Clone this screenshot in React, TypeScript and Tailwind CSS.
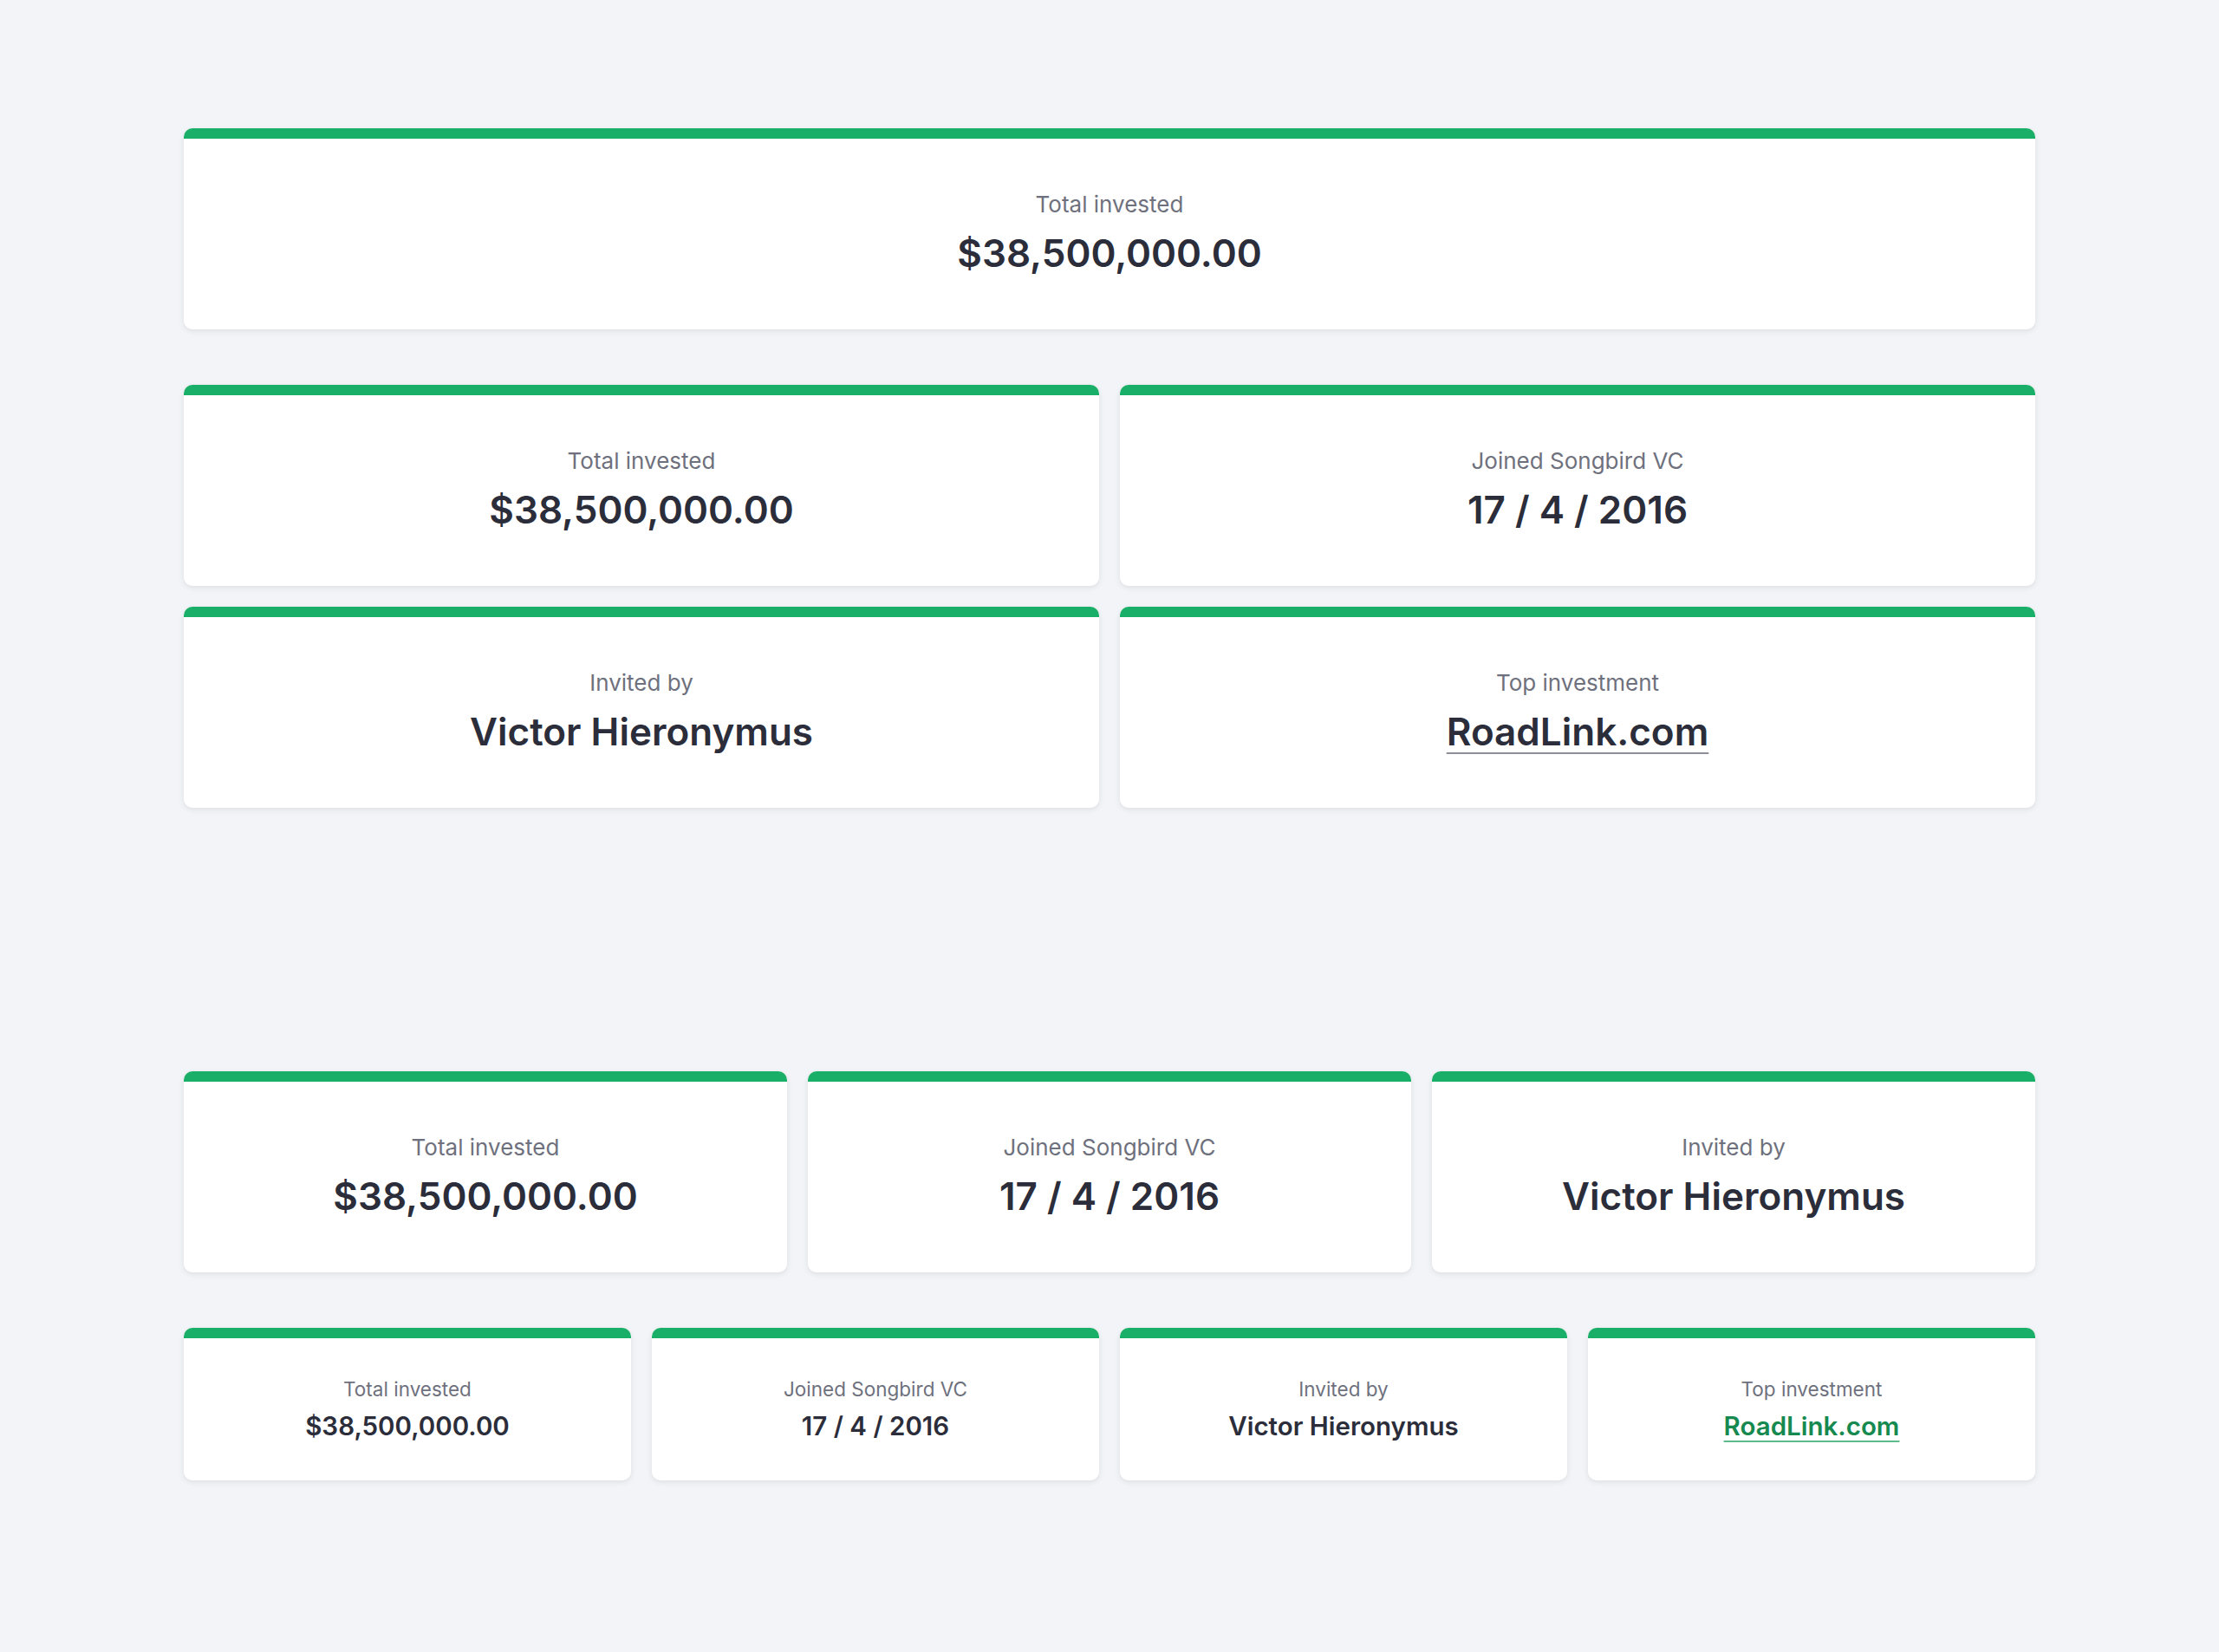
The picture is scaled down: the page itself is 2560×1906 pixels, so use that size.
// StatCards

type Stat = {
  label: string;
  value: string;
  link?: boolean;
};

const stats: Stat[] = [
  { label: "Total invested", value: "$38,500,000.00" },
  { label: "Joined Songbird VC", value: "17 / 4 / 2016" },
  { label: "Invited by", value: "Victor Hieronymus" },
  { label: "Top investment", value: "RoadLink.com", link: true },
];

const StatCard = ({ stat }: { stat: Stat }) => {
  return (
    <div className="h-[232px] flex flex-col rounded-[10px] overflow-hidden bg-white shadow-[0_2px_6px_rgba(30,40,70,0.10)]">
      <div className="h-3 bg-[#1aaf68]" />
      <div className="flex-1 flex flex-col items-center justify-center pb-[2px]">
        <span className="text-[26px] leading-[32px] text-[#6e717d]">
          {stat.label}
        </span>
        <span className="mt-[14px] text-[44px] leading-[52px] font-semibold text-[#2b2e3a]">
          {stat.link ? (
            <a
              href="#"
              className="underline decoration-2 decoration-[#8c8e98] underline-offset-[8px]"
            >
              {stat.value}
            </a>
          ) : (
            stat.value
          )}
        </span>
      </div>
    </div>
  );
};

const SmallStatCard = ({ stat }: { stat: Stat }) => {
  return (
    <div className="h-[176px] flex flex-col rounded-[10px] overflow-hidden bg-white shadow-[0_2px_6px_rgba(30,40,70,0.10)]">
      <div className="h-3 bg-[#1aaf68]" />
      <div className="flex-1 flex flex-col items-center justify-center">
        <span className="text-[22.5px] leading-[28px] text-[#6e717d]">
          {stat.label}
        </span>
        <span className="mt-[9px] text-[29.5px] leading-[38px] font-semibold text-[#2b2e3a]">
          {stat.link ? (
            <a
              href="#"
              className="text-[#15894f] underline decoration-2 decoration-[#5dbb8c] underline-offset-[6px]"
            >
              {stat.value}
            </a>
          ) : (
            stat.value
          )}
        </span>
      </div>
    </div>
  );
};

export default function App() {
  return (
    <div className="min-h-screen bg-[#f3f4f7] font-['Inter','Lato',sans-serif] pt-[148px] pb-[198px]">
      <div className="w-[2136px] mx-auto flex flex-col">
        {/* single */}
        <StatCard stat={stats[0]} />

        {/* two columns */}
        <div className="mt-16 grid grid-cols-2 gap-6">
          {stats.map((s) => (
            <StatCard key={s.label} stat={s} />
          ))}
        </div>

        {/* three columns */}
        <div className="mt-[304px] grid grid-cols-3 gap-6">
          {stats.slice(0, 3).map((s) => (
            <StatCard key={s.label} stat={s} />
          ))}
        </div>

        {/* four columns */}
        <div className="mt-16 grid grid-cols-4 gap-6">
          {stats.map((s) => (
            <SmallStatCard key={s.label} stat={s} />
          ))}
        </div>
      </div>
    </div>
  );
}
